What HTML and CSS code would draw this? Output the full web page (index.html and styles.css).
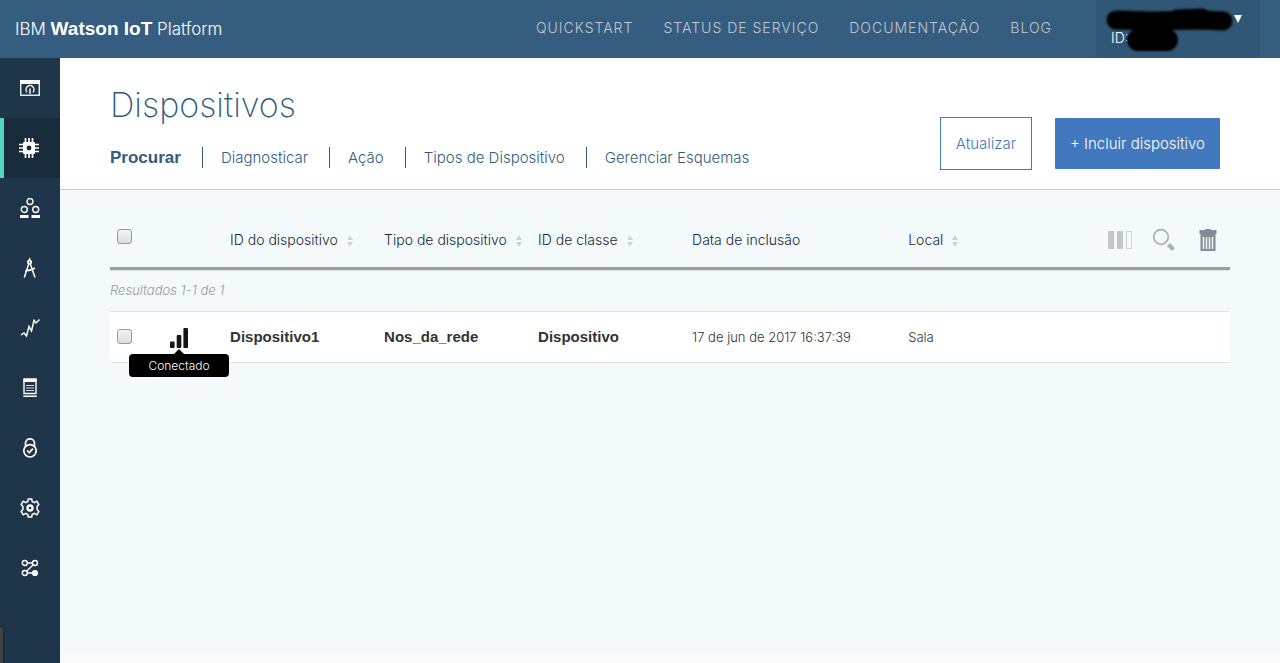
FILE: index.html
```html
<!DOCTYPE html>
<html lang="pt-BR">
<head>
<meta charset="utf-8">
<meta name="viewport" content="width=device-width, initial-scale=1">
<title>IBM Watson IoT Platform</title>
<link rel="stylesheet" href="styles.css">
</head>
<body>
<header class="topbar">
  <a class="brand" href="#">IBM <b>Watson IoT</b> Platform</a>
  <nav class="topnav">
    <a href="#">QUICKSTART</a>
    <a href="#">STATUS DE SERVIÇO</a>
    <a href="#">DOCUMENTAÇÃO</a>
    <a href="#">BLOG</a>
  </nav>
  <button class="account" type="button" aria-label="Conta">
    <svg class="caret" viewBox="0 0 8 8" width="8" height="8"><path d="M0 0h8L4 8z" fill="#fff"/></svg>
    <span>ID:</span>
    <svg class="redaction" viewBox="0 0 134 48" width="134" height="48" fill="none" stroke="#000" stroke-linecap="round" stroke-linejoin="round">
      <path d="M14 15L50 16L100 15L121 16" stroke-width="19"/>
      <path d="M75 14L100 13" stroke-width="19"/>
      <path d="M36 35L65 35" stroke-width="22"/>
    </svg>
  </button>
</header>
<div class="shell">
  <nav class="sidebar" aria-label="Menu">
    <a href="#" aria-label="Painéis"><svg viewBox="0 0 20 20" width="20" height="20"><rect x=".75" y="2.750" width="18.500" height="14.500" fill="none" stroke="#fff" stroke-width="1.300"/><path d="M0 2h20v4H0z" fill="#fff"/><path d="M7 14.200a4 4 0 1 1 6 0M10 10.500v5.500" fill="none" stroke="#fff" stroke-width="1.400"/></svg></a>
    <a class="active" href="#" aria-label="Dispositivos"><svg viewBox="0 0 20 20" width="20" height="20"><path d="M6.500 0v20M10 0v20M13.500 0v20M0 6.500h20M0 10h20M0 13.500h20" stroke="#fff" stroke-width="1.700"/><rect x="4" y="4" width="12" height="12" rx="1" fill="#fff"/><circle cx="10" cy="10" r="2.400" fill="#182b3b"/></svg></a>
    <a href="#" aria-label="Membros"><svg viewBox="0 0 20 20" width="20" height="20"><g fill="none" stroke="#fff" stroke-width="1.400"><circle cx="10" cy="3.500" r="3"/><circle cx="4.300" cy="11.500" r="3"/><circle cx="15.700" cy="11.500" r="3"/></g><path d="M0 17h8.500v3H0zM11.500 17H20v3h-8.500z" fill="#fff"/></svg></a>
    <a href="#" aria-label="Aplicativos"><svg viewBox="0 0 20 20" width="20" height="20"><g fill="none" stroke="#fff" stroke-width="1.500"><path d="M9 5L4.300 19.500M10 5l5 14.500M5 13q5 0 10-3"/></g><path d="M9 0h1.200v2H9z" fill="#fff"/><circle cx="9.500" cy="4" r="2.500" fill="#fff"/><circle cx="9.500" cy="4.300" r=".7" fill="#1f364a"/></svg></a>
    <a href="#" aria-label="Uso"><svg viewBox="0 0 20 20" width="20" height="20"><path d="M1 17l3-2 2.500 3L9 8.500l2.500 4.500L14 2.500l2 2.500 3.500-3.500" fill="none" stroke="#fff" stroke-width="1.500"/></svg></a>
    <a href="#" aria-label="Regras"><svg viewBox="0 0 20 20" width="20" height="20"><path d="M4 1h12v14.500H4z" fill="none" stroke="#fff" stroke-width="1.400"/><path d="M3.500 1h13v3h-13zM3.300 17.500h13.400V19H3.300z" fill="#fff"/><path d="M6 7.500h8M6 10h8M6 12.500h8" stroke="#cdd5dc" stroke-width="1.100"/></svg></a>
    <a href="#" aria-label="Segurança"><svg viewBox="0 0 20 20" width="20" height="20"><g fill="none" stroke="#fff" stroke-width="1.700"><circle cx="10" cy="12.800" r="6.200"/><path d="M5.500 8V5.300a4.500 4.500 0 0 1 9 0V8"/><path d="M7.200 12.500l2 2.200 3.700-4"/></g></svg></a>
    <a href="#" aria-label="Configurações"><svg viewBox="0 0 20 20" width="20" height="20"><path d="M8.300 1h3.400l.5 2.500 2.100 1.100 2.500-1.400 2 3.300-1.700 2v3l1.700 2-2 3.300-2.500-1.400-2.100 1.100-.5 2.500H8.300l-.5-2.500-2.100-1.100-2.500 1.400-2-3.300 1.700-2v-3l-1.700-2 2-3.300 2.500 1.400 2.100-1.100z" fill="none" stroke="#fff" stroke-width="1.500"/><circle cx="10" cy="10" r="2.500" fill="none" stroke="#fff" stroke-width="2.300"/></svg></a>
    <a href="#" aria-label="Extensões"><svg viewBox="0 0 20 20" width="20" height="20"><g fill="none" stroke="#fff" stroke-width="1.400"><circle cx="4.800" cy="5" r="2.500"/><circle cx="15" cy="5" r="2.500"/><circle cx="4.800" cy="15" r="2.500"/><path d="M7.300 5h5.200M13.200 6.800L6.600 13.200M7.300 15h5"/></g><circle cx="15" cy="15" r="3.100" fill="#fff"/></svg></a>
  </nav>
  <main class="main">
    <section class="pagehead">
      <div>
        <h1>Dispositivos</h1>
        <nav class="tabs">
          <a class="current" href="#">Procurar</a>
          <a href="#">Diagnosticar</a>
          <a href="#">Ação</a>
          <a href="#">Tipos de Dispositivo</a>
          <a href="#">Gerenciar Esquemas</a>
        </nav>
      </div>
      <div class="actions">
        <button class="btn outline" type="button">Atualizar</button>
        <button class="btn solid" type="button">+ Incluir dispositivo</button>
      </div>
    </section>
    <section class="content">
      <table class="devices">
        <colgroup><col class="c-check"><col class="c-state"><col class="c-name"><col class="c-name"><col class="c-name"><col class="c-date"><col class="c-place"><col class="c-tools"></colgroup>
        <thead>
          <tr>
            <th class="check"><input type="checkbox" aria-label="Selecionar tudo"></th>
            <th></th>
            <th>ID do dispositivo<svg class="sort" viewBox="0 0 6 12" width="6" height="12"><path d="M3 0l3 5H0zM0 7h6l-3 5z"/></svg></th>
            <th>Tipo de dispositivo<svg class="sort" viewBox="0 0 6 12" width="6" height="12"><path d="M3 0l3 5H0zM0 7h6l-3 5z"/></svg></th>
            <th>ID de classe<svg class="sort" viewBox="0 0 6 12" width="6" height="12"><path d="M3 0l3 5H0zM0 7h6l-3 5z"/></svg></th>
            <th>Data de inclusão</th>
            <th>Local<svg class="sort" viewBox="0 0 6 12" width="6" height="12"><path d="M3 0l3 5H0zM0 7h6l-3 5z"/></svg></th>
            <th>
              <div class="tools">
                <button type="button" aria-label="Colunas"><svg viewBox="0 0 24 24" width="24" height="24"><path d="M0 3h6v18H0zM9 3h6v18H9z" fill="#c6c6c6"/><path d="M18.500 3.500h5v17h-5z" fill="none" stroke="#cfd3d5"/></svg></button>
                <button type="button" aria-label="Pesquisar"><svg viewBox="0 0 24 24" width="24" height="24" fill="none" stroke="#adadad"><circle cx="9" cy="9" r="7.300" stroke-width="1.700"/><path d="M16.500 16.500l5 5" stroke-width="4"/></svg></button>
                <button type="button" aria-label="Excluir"><svg viewBox="0 0 24 24" width="24" height="24"><path d="M3.500 2H9V1h6v1h5.500v4H3.500z" fill="#818d94"/><path d="M4.500 6h15v17h-15z" fill="#818d94"/><path d="M7.500 9v12M10.500 9v12M13.500 9v12M16.500 9v12" stroke="#f4f9fc" stroke-width="1.500"/></svg></button>
              </div>
            </th>
          </tr>
        </thead>
        <tbody>
          <tr class="summary"><td colspan="8">Resultados 1-1 de 1</td></tr>
          <tr class="device">
            <td class="check"><input type="checkbox" aria-label="Selecionar Dispositivo1"></td>
            <td>
              <div class="state">
                <svg viewBox="0 0 18 20" width="18" height="20" fill="#151515"><rect y="13.500" width="4.600" height="6.500" rx="1"/><rect x="6.700" y="7" width="4.600" height="13" rx="1"/><rect x="13.400" width="4.600" height="20" rx="1"/></svg>
                <span class="tooltip" role="tooltip">Conectado</span>
              </div>
            </td>
            <td><b>Dispositivo1</b></td>
            <td><b>Nos_da_rede</b></td>
            <td><b>Dispositivo</b></td>
            <td>17 de jun de 2017 16:37:39</td>
            <td>Sala</td>
            <td></td>
          </tr>
        </tbody>
      </table>
    </section>
  </main>
</div>
<div class="statusbubble"></div>
</body>
</html>
```
FILE: styles.css
```css
* { box-sizing: border-box; }

body {
  margin: 0;
  min-height: 100vh;
  display: flex;
  flex-direction: column;
  font: 300 14px/20px Inter, "Liberation Sans", sans-serif;
  color: #333;
}

a { color: inherit; text-decoration: none; }
button { font: inherit; border: 0; cursor: pointer; }
svg { display: block; }
b, .current { font-family: "Liberation Sans", sans-serif; font-weight: 700; }

.topbar {
  display: flex;
  align-items: stretch;
  height: 58px;
  padding: 0 20px 0 15px;
  background: #355d80;
  color: #fff;
}
.brand { font-size: 17px; line-height: 58px; margin-right: auto; white-space: nowrap; }
.brand b { font-size: 19px; }
.topnav {
  display: flex;
  gap: 30px;
  margin-right: 44px;
  line-height: 56px;
  letter-spacing: 1px;
  color: #c3c8cb;
  white-space: nowrap;
}
.account {
  position: relative;
  width: 164px;
  padding: 15px 18px 10px 15px;
  display: flex;
  flex-direction: column;
  justify-content: space-between;
  align-items: flex-start;
  background: #315776;
  color: #fff;
}
.caret { align-self: flex-end; }
.redaction { position: absolute; left: 6px; top: 5px; filter: blur(1px); }

.shell { flex: 1; display: flex; }
.sidebar { width: 60px; flex: none; background: #1f364a; }
.sidebar a {
  display: flex;
  align-items: center;
  justify-content: center;
  height: 60px;
}
.sidebar .active {
  background: #182b3b;
  border-left: 4px solid #4dd6c1;
  padding-right: 6px;
}

.main { flex: 1; min-width: 0; display: flex; flex-direction: column; }
.pagehead {
  display: flex;
  justify-content: space-between;
  align-items: flex-end;
  padding: 24px 60px 19px 50px;
  border-bottom: 1px solid #ccc;
  background: #fff;
  color: #325c80;
}
h1 { margin: 0 0 19px; font-size: 34px; line-height: 46px; font-weight: 200; }
.tabs {
  display: flex;
  margin-bottom: 2px;
  font-size: 15px;
  line-height: 21px;
  white-space: nowrap;
}
.current { font-size: 17px; }
.tabs a + a { border-left: 1px solid #325c80; margin-left: 21px; padding-left: 18px; }
.actions { display: flex; align-items: center; gap: 23px; }
.btn { padding: 0 15px; height: 51px; font-size: 15px; white-space: nowrap; }
.outline { height: 53px; border: 1px solid #4178be; background: #fff; color: #4178be; }
.solid { background: #4178be; color: #fff; border-radius: 1px; }

.content {
  flex: 1;
  padding: 24px 50px;
  background: #f4f9fc;
  border-bottom: 10px solid #f9f9f9;
}
.devices { width: 100%; table-layout: fixed; border-collapse: collapse; }
.c-check, .c-state { width: 5.36%; }
.c-name { width: 13.75%; }
.c-date { width: 19.3%; }
.c-place { width: 17.8%; }
th, td { padding: 0; text-align: left; font-weight: 300; white-space: nowrap; }
th { height: 54px; color: #152935; border-bottom: 3px solid #96a0a0; }
td { font-size: 13px; }
td b { font-size: 15px; }
.sort { display: inline-block; vertical-align: -2px; margin-left: 9px; fill: #d0d3d5; }
.summary td {
  height: 43px;
  color: #999;
  font-style: italic;
  box-shadow: inset 0 1px #dfe5e7;
}
.device { background: #fff; }
.device td { height: 51px; border: 1px solid #dfe5e7; border-width: 1px 0; }
.check { padding-left: 7px; }
.check input {
  appearance: none;
  display: block;
  width: 15px;
  height: 15px;
  margin: 0;
  border: 1px solid #999;
  border-radius: 3px;
  background: linear-gradient(#f3f3f3, #dcdcdc);
}
th.check { padding-bottom: 7px; }
.tools { display: flex; gap: 20px; }
.tools button { padding: 0; background: none; }
.state { position: relative; width: 18px; margin-top: 2px; }
.tooltip {
  position: absolute;
  top: 26px;
  left: 50%;
  width: 100px;
  margin-left: -50px;
  border-radius: 4px;
  background: #000;
  color: #fff;
  font-size: 12px;
  line-height: 23px;
  text-align: center;
}
.tooltip::before {
  content: "";
  position: absolute;
  left: 45px;
  bottom: 100%;
  border: 5px solid transparent;
  border-top-width: 0;
  border-bottom-color: #000;
}
.statusbubble {
  position: fixed;
  left: 0;
  bottom: 0;
  width: 4px;
  height: 37px;
  border: solid #222;
  border-width: 1px 1px 0 0;
  border-radius: 0 3px 0 0;
  background: #414442;
}
```
